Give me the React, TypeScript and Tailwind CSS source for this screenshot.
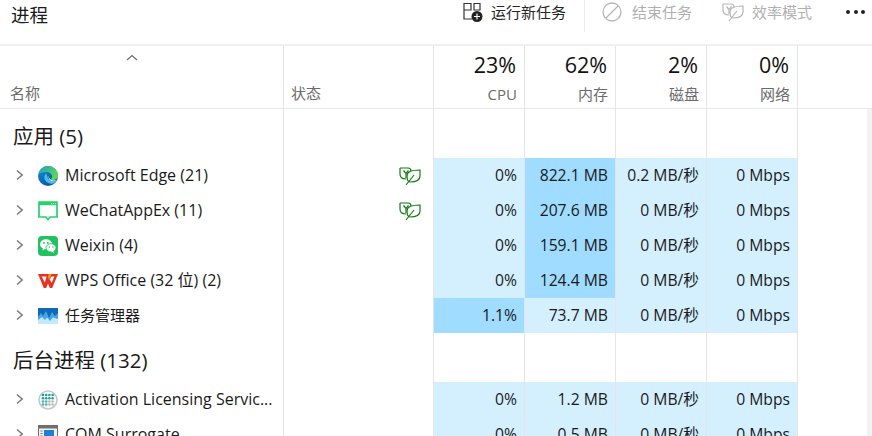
import type { ReactNode } from "react";

const FONT = "font-['Open_Sans','Noto_Sans_CJK_SC',sans-serif]";

function Chevron() {
  return (
    <svg viewBox="0 0 10 12" className="w-[10px] h-[12px] -mt-px" fill="none" stroke="#7a7a7a" strokeWidth="1.5">
      <path d="M3 1.5 L8.2 6 L3 10.5" />
    </svg>
  );
}

function Leaf({ muted }: { muted?: boolean }) {
  const a = muted ? "#b5b5b5" : "#107c10";
  return (
    <svg viewBox="0 0 22 20" className="w-[22px] h-[20px]" fill="none" stroke={a} strokeWidth="1.2">
      <path d="M1 2 H9 C11 2 12 3 12 5 M1 2 V8 C1 12 4 13 7 13" />
      <path d="M4.5 4.5 L7 7.5 L9.5 4.5 M7 7.5 V12" />
      <path d="M8 10 C8 6 12 4 21 4 V10 C21 15 16 16 11 16 C9 16 8 14 8 10 Z" fill="#fff" />
      <path d="M7 19 L15 9" />
    </svg>
  );
}

function EdgeIcon() {
  return (
    <svg viewBox="0 0 20 20" className="w-5 h-5">
      <defs>
        <linearGradient id="edgeA" x1="0" y1="0" x2="0.8" y2="1">
          <stop offset="0" stopColor="#0f8fd6" />
          <stop offset="1" stopColor="#0a4f9e" />
        </linearGradient>
        <linearGradient id="edgeB" x1="0" y1="0" x2="1" y2="0.7">
          <stop offset="0" stopColor="#1a9fc4" />
          <stop offset="1" stopColor="#66d84e" />
        </linearGradient>
      </defs>
      <circle cx="10" cy="10" r="10" fill="url(#edgeA)" />
      <path d="M8 7.5 C5 10 6 16 12 17.5 C15 18.3 17.5 17 19 14.5 C16 16 12 15.5 10.5 13 C9.5 11.5 9 9 8 7.5Z" fill="#3ec3e8" />
      <path d="M0.5 8 C1.5 3 5.5 0 10 0 C16 0 20 4.5 20 9.5 C20 12.5 17.5 14 15 14 C13.5 14 12.5 13.5 13 13 C14 12 14.5 11 14 9.5 C13 7 10.5 6 8.5 6 C5 6 2.5 7 0.5 8Z" fill="url(#edgeB)" />
      <path d="M10.2 9.5 C10.6 12 12.5 14.4 15.5 14.6 C16.8 14.7 18 14.2 19 13.5 C17.6 15.6 14.4 15.8 12.4 14.4 C11 13.4 10.2 11.4 10.2 9.5Z" fill="#fff" />
    </svg>
  );
}

function WeChatAppIcon() {
  return (
    <svg viewBox="0 0 20 20" className="w-5 h-5">
      <path d="M1 1 H19 V16 H12 L10 18.5 L8 16 H1 Z" fill="#fff" stroke="#23d46b" strokeWidth="1.7" />
      <path d="M1 1 H19 V4.2 H1 Z" fill="#23d46b" />
      <path d="M13 2.6 H14 M15 2.6 H16 M17 2.6 H18" stroke="#d8f8e4" strokeWidth="1" />
    </svg>
  );
}

function WeixinIcon() {
  return (
    <svg viewBox="0 0 20 20" className="w-5 h-5">
      <rect width="20" height="20" rx="4" fill="#1fc35f" />
      <ellipse cx="8" cy="8.3" rx="6" ry="5" fill="#fff" />
      <path d="M5 11.5 L4.5 14.5 L7.5 12.5 Z" fill="#fff" />
      <ellipse cx="13" cy="11.8" rx="5" ry="4.1" fill="#fff" stroke="#1fc35f" strokeWidth=".8" />
      <path d="M15 14.5 L16 17 L13 15 Z" fill="#fff" />
      <circle cx="6" cy="7" r=".9" fill="#1fc35f" />
      <circle cx="9.8" cy="7" r=".9" fill="#1fc35f" />
      <circle cx="11.3" cy="11" r=".7" fill="#1fc35f" />
      <circle cx="14.8" cy="11" r=".7" fill="#1fc35f" />
    </svg>
  );
}

function WpsIcon() {
  return (
    <svg viewBox="0 0 20 20" className="w-5 h-5">
      <path d="M0 3 H20 L14.2 17 H11.8 L10 12.5 L8.2 17 H5.8 Z" fill="#e8321f" />
      <path d="M3.6 5.4 H8.6 L6.9 11.6 Z" fill="#fff" />
      <path d="M13.4 5.4 H16.4 L13.6 12 L11.9 8.6 Z" fill="#fff" />
      <path d="M10.6 3 H13.6 L11.2 9 L10 6.4 Z" fill="#f7931e" />
    </svg>
  );
}

function TaskMgrIcon() {
  return (
    <svg viewBox="0 0 20 20" className="w-5 h-5">
      <rect y="2" width="20" height="16" fill="#0f69b4" />
      <path d="M0 11 L3 7 L5 10 L8 5 L11 12 L14 6 L17 10 L20 7 V18 H0 Z" fill="#45a5e6" />
      <path d="M0 14 L4 11 L7 14 L9 11.5 L12 15 L15 11.5 L20 13 V18 H0 Z" fill="#c4e9fb" />
    </svg>
  );
}

function ActivationIcon() {
  const dots = [];
  for (let y = 0; y < 4; y++) {
    for (let x = 0; x < 4; x++) {
      const gray = y > 1 && x > 1;
      dots.push(<circle key={`${x}-${y}`} cx={5 + x * 3.2} cy={5 + y * 3.2} r="1.25" fill={gray ? "#b4b8ba" : y < 2 ? "#1f9c96" : "#47b5ad"} />);
    }
  }
  return (
    <svg viewBox="0 0 20 20" className="w-5 h-5">
      <circle cx="10" cy="10" r="9" fill="#fafafa" stroke="#c4c8c8" strokeWidth="1.6" />
      {dots}
    </svg>
  );
}

function ComIcon() {
  return (
    <svg viewBox="0 0 20 20" className="w-5 h-5">
      <rect x=".5" y=".5" width="19" height="19" fill="#f2f2f2" stroke="#6d6d6d" />
      <rect x="1" y="1" width="18" height="2.5" fill="#707070" />
      <rect x="6" y="5" width="10" height="8" fill="#1e7fd6" />
      <path d="M2.5 6 H4.5 M2.5 8.5 H4.5 M2.5 11 H4.5" stroke="#777" />
    </svg>
  );
}

type Row = {
  name: string;
  icon: ReactNode;
  cpu: string;
  mem: string;
  disk: string;
  leaf?: boolean;
  hotCpu?: boolean;
  hotMem?: boolean;
  cjk?: boolean;
};

const apps: Row[] = [
  { name: "Microsoft Edge (21)", icon: <EdgeIcon />, cpu: "0%", mem: "822.1 MB", disk: "0.2 MB/秒", leaf: true, hotMem: true },
  { name: "WeChatAppEx (11)", icon: <WeChatAppIcon />, cpu: "0%", mem: "207.6 MB", disk: "0 MB/秒", leaf: true, hotMem: true },
  { name: "Weixin (4)", icon: <WeixinIcon />, cpu: "0%", mem: "159.1 MB", disk: "0 MB/秒", hotMem: true },
  { name: "WPS Office (32 位) (2)", icon: <WpsIcon />, cpu: "0%", mem: "124.4 MB", disk: "0 MB/秒", hotMem: true },
  { name: "任务管理器", icon: <TaskMgrIcon />, cpu: "1.1%", mem: "73.7 MB", disk: "0 MB/秒", hotCpu: true, cjk: true },
];

const background: Row[] = [
  { name: "Activation Licensing Servic...", icon: <ActivationIcon />, cpu: "0%", mem: "1.2 MB", disk: "0 MB/秒" },
  { name: "COM Surrogate", icon: <ComIcon />, cpu: "0%", mem: "0.5 MB", disk: "0 MB/秒" },
];

const cols = [
  { pct: "23%", label: "CPU" },
  { pct: "62%", label: "内存" },
  { pct: "2%", label: "磁盘" },
  { pct: "0%", label: "网络" },
];

function Cell({ hot, children }: { hot?: boolean; children: ReactNode }) {
  return (
    <div className={`w-[91px] border-r border-[#e5e5e5] pr-[7px] flex items-center justify-end text-[15.7px] text-[#1a1a1a] ${hot ? "bg-[#9fdcff]" : "bg-[#d4f0ff]"}`}>
      {children}
    </div>
  );
}

function ProcessRow({ row }: { row: Row }) {
  return (
    <div className="flex h-[35px] shrink-0">
      <div className="w-[284px] border-r border-[#e5e5e5] flex items-center pl-[14px]">
        <Chevron />
        <div className="ml-[14px] mr-[7px] w-5 h-5 shrink-0">{row.icon}</div>
        <span className={`${row.cjk ? "text-[15px]" : "text-[16px] -mt-[2px]"} text-[#1a1a1a] whitespace-nowrap`}>{row.name}</span>
      </div>
      <div className="w-[150px] border-r border-[#e5e5e5] flex items-center justify-end pr-[12px]">
        {row.leaf && <Leaf />}
      </div>
      <Cell hot={row.hotCpu}>{row.cpu}</Cell>
      <Cell hot={row.hotMem}>{row.mem}</Cell>
      <Cell>{row.disk}</Cell>
      <Cell>0 Mbps</Cell>
    </div>
  );
}

function GroupRow({ title }: { title: string }) {
  return (
    <div className="flex shrink-0 h-[49px]">
      <div className="w-[284px] border-r border-[#e5e5e5] flex items-center pl-[13px] pt-[5px] text-[20.5px] text-[#1a1a1a]">{title}</div>
      <div className="w-[150px] border-r border-[#e5e5e5]" />
      <div className="w-[91px] border-r border-[#e5e5e5]" />
      <div className="w-[91px] border-r border-[#e5e5e5]" />
      <div className="w-[91px] border-r border-[#e5e5e5]" />
      <div className="w-[91px] border-r border-[#e5e5e5]" />
    </div>
  );
}

export default function App() {
  return (
    <div className={`${FONT} w-[872px] h-[436px] overflow-hidden bg-white flex flex-col`}>
      <div className="h-[44px] shrink-0 flex items-start border-b-2 border-[#f0f0f0] box-content">
        <div className="ml-[11px] mt-[2px] text-[18.5px] text-[#1a1a1a] leading-[26px]">进程</div>
        <div className="ml-auto flex items-center h-[24px] text-[15px]">
          <svg viewBox="0 0 20 20" className="w-5 h-5 mr-[8px]" fill="none" stroke="#333" strokeWidth="1.2">
            <path d="M1 1.5 H8 V8 H1 Z M11 1.5 H17 V8 H11 Z M1 8 V17 H9" />
            <circle cx="14" cy="14.5" r="5.5" fill="#222" stroke="none" />
            <path d="M14 11.5 V17.5 M11 14.5 H17" stroke="#fff" />
          </svg>
          <span className="text-[#262626]">运行新任务</span>
          <div className="w-px h-[32px] self-start bg-[#ececec] ml-[18px] mr-[17px]" />
          <svg viewBox="0 0 20 20" className="w-5 h-5 mr-[10px]" fill="none" stroke="#b5b5b5" strokeWidth="1.3">
            <circle cx="10" cy="10" r="9" />
            <path d="M4 16 L16 4" />
          </svg>
          <span className="text-[#b0b0b0]">结束任务</span>
          <div className="ml-[30px] mr-[8px]"><Leaf muted /></div>
          <span className="text-[#b0b0b0]">效率模式</span>
          <div className="ml-[34px] mr-[7px] flex gap-[3.5px]">
            <div className="w-[4px] h-[4px] rounded-full bg-[#222]" />
            <div className="w-[4px] h-[4px] rounded-full bg-[#222]" />
            <div className="w-[4px] h-[4px] rounded-full bg-[#222]" />
          </div>
        </div>
      </div>

      <div className="h-[63px] shrink-0 flex border-b border-[#e8e8e8]">
        <div className="w-[284px] border-r border-[#e5e5e5] relative flex items-end pl-[10px] pb-[4px] text-[15px] text-[#6b6b6b]">
          <svg viewBox="0 0 12 7" className="absolute left-[126px] top-[8px] w-3 h-[7px]" fill="none" stroke="#707070" strokeWidth="1.3">
            <path d="M1 6 L6 1.5 L11 6" />
          </svg>
          名称
        </div>
        <div className="w-[150px] border-r border-[#e5e5e5] flex items-end pl-[7px] pb-[4px] text-[15px] text-[#6b6b6b]">状态</div>
        {cols.map((c) => (
          <div key={c.label} className="w-[91px] border-r border-[#e5e5e5] flex flex-col items-end justify-end pr-[7px] pb-[4px]">
            <span className="text-[21.5px] leading-[26px] mr-px text-[#111]">{c.pct}</span>
            <span className="text-[15px] leading-[20px] mt-[6px] text-[#6b6b6b]">{c.label}</span>
          </div>
        ))}
      </div>

      <div className="relative flex-1 flex flex-col overflow-hidden">
        <GroupRow title="应用 (5)" />
        {apps.map((r) => <ProcessRow key={r.name} row={r} />)}
        <GroupRow title="后台进程 (132)" />
        {background.map((r) => <ProcessRow key={r.name} row={r} />)}
        <div className="absolute right-0 top-0 bottom-0 w-[5px] bg-[#f3f3f3]" />
      </div>
    </div>
  );
}
